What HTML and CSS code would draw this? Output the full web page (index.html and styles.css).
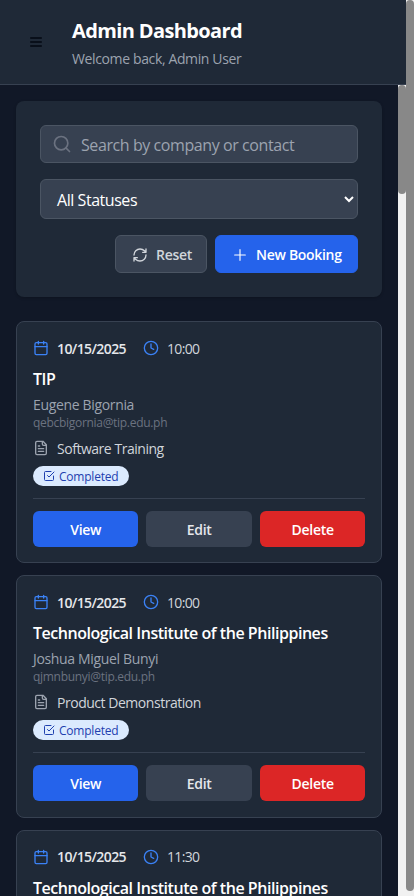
FILE: index.html
```html
<!DOCTYPE html>
<html lang="en">
<head>
<meta charset="utf-8">
<title>Admin Dashboard</title>
<link rel="stylesheet" href="styles.css">
</head>
<body>
<svg class="sprite" aria-hidden="true">
  <symbol id="calendar" viewBox="0 0 24 24"><rect x="3" y="4" width="18" height="18" rx="2"/><path d="M16 2v4M8 2v4M3 10h18"/></symbol>
  <symbol id="clock" viewBox="0 0 24 24"><circle cx="12" cy="12" r="10"/><path d="M12 6v6l4 2"/></symbol>
  <symbol id="file" viewBox="0 0 24 24"><path d="M15 2H6a2 2 0 0 0-2 2v16a2 2 0 0 0 2 2h12a2 2 0 0 0 2-2V7zM14 2v4a2 2 0 0 0 2 2h4M16 13H8M16 17H8M10 9H8"/></symbol>
  <symbol id="check" viewBox="0 0 24 24"><path d="M9 11l3 3L22 4M21 12v7a2 2 0 0 1-2 2H5a2 2 0 0 1-2-2V5a2 2 0 0 1 2-2h11"/></symbol>
</svg>
<div class="app">
  <div class="page">
    <header class="header">
      <svg class="icon menu" viewBox="0 0 24 24"><path d="M4 6h16M4 12h16M4 18h16"/></svg>
      <div class="heading">
        <h1 class="title">Admin Dashboard</h1>
        <p class="welcome">Welcome back, Admin User</p>
      </div>
    </header>
    <div class="body">
      <main class="main">
        <section class="filters">
          <div class="field search">
            <svg class="icon" viewBox="0 0 24 24"><circle cx="11" cy="11" r="8"/><path d="M21 21l-4.35-4.35"/></svg>
            <span>Search by company or contact</span>
          </div>
          <div class="field select">
            <span>All Statuses</span>
            <svg class="icon chevron" viewBox="0 0 10 6"><path d="M1 1l4 4 4-4"/></svg>
          </div>
          <div class="tools">
            <div class="btn reset"><svg class="icon" viewBox="0 0 24 24"><path d="M3 12a9 9 0 0 1 9-9 9.75 9.75 0 0 1 6.74 2.74L21 8M21 3v5h-5M21 12a9 9 0 0 1-9 9 9.75 9.75 0 0 1-6.74-2.74L3 16M8 16H3v5"/></svg><span>Reset</span></div>
            <div class="btn new"><svg class="icon" viewBox="0 0 24 24"><path d="M12 4v16M4 12h16"/></svg><span>New Booking</span></div>
          </div>
        </section>

        <article class="card">
          <div class="when"><svg class="icon"><use href="#calendar"/></svg><span class="date">10/15/2025</span><svg class="icon"><use href="#clock"/></svg><span class="time">10:00</span></div>
          <h2 class="company">TIP</h2>
          <p class="contact">Eugene Bigornia</p>
          <p class="email">qebcbigornia@tip.edu.ph</p>
          <div class="service"><svg class="icon"><use href="#file"/></svg><span>Software Training</span></div>
          <div class="badge"><svg class="icon"><use href="#check"/></svg><span>Completed</span></div>
          <div class="actions"><div class="action view">View</div><div class="action">Edit</div><div class="action delete">Delete</div></div>
        </article>

        <article class="card">
          <div class="when"><svg class="icon"><use href="#calendar"/></svg><span class="date">10/15/2025</span><svg class="icon"><use href="#clock"/></svg><span class="time">10:00</span></div>
          <h2 class="company">Technological Institute of the Philippines</h2>
          <p class="contact">Joshua Miguel Bunyi</p>
          <p class="email">qjmnbunyi@tip.edu.ph</p>
          <div class="service"><svg class="icon"><use href="#file"/></svg><span>Product Demonstration</span></div>
          <div class="badge"><svg class="icon"><use href="#check"/></svg><span>Completed</span></div>
          <div class="actions"><div class="action view">View</div><div class="action">Edit</div><div class="action delete">Delete</div></div>
        </article>

        <article class="card">
          <div class="when"><svg class="icon"><use href="#calendar"/></svg><span class="date">10/15/2025</span><svg class="icon"><use href="#clock"/></svg><span class="time">11:30</span></div>
          <h2 class="company">Technological Institute of the Philippines</h2>
        </article>
      </main>
      <div class="bar inner"><div class="thumb"></div></div>
    </div>
  </div>
  <div class="bar outer"><div class="thumb"></div></div>
</div>
</body>
</html>
```
FILE: styles.css
```css
* { box-sizing: border-box; margin: 0; padding: 0; }
body { font-family: "Open Sans", "Noto Sans", sans-serif; font-size: 14px; background: #111827; color: #fff; overflow: hidden; }
.sprite { position: absolute; width: 0; height: 0; }
.icon { width: 16px; height: 16px; flex: none; fill: none; stroke: currentColor; stroke-width: 2; stroke-linecap: round; stroke-linejoin: round; }
span, p, h1, h2 { white-space: nowrap; }

.app { display: flex; height: 896px; overflow: hidden; }
.page { display: flex; flex-direction: column; width: 406.4px; flex: none; }
.header { display: flex; align-items: center; gap: 28px; height: 85px; flex: none; padding-left: 28px; background: #1f2937; border-bottom: 1px solid #374151; }
.heading { padding-top: 2px; }
.menu { color: #030712; }
.title { font-size: 20px; font-weight: 700; line-height: 28px; letter-spacing: -0.62px; }
.welcome { margin-top: 4px; font-size: 14px; line-height: 20px; letter-spacing: -0.37px; color: #9ca3af; }

.body { display: flex; flex: 1; min-height: 0; }
.main { display: flex; flex-direction: column; gap: 12px; width: 398.4px; flex: none; padding: 16px 16px 0; overflow: hidden; }

.filters { display: flex; flex-direction: column; gap: 16px; flex: none; height: 196px; margin-bottom: 12px; padding: 24px; background: #1f2937; border-radius: 8px; box-shadow: 0 1px 3px rgba(0, 0, 0, .2); }
.field { display: flex; align-items: center; font-size: 16px; background: #374151; border: 1px solid #4b5563; border-radius: 6px; }
.search { height: 38px; gap: 9px; padding-left: 11px; color: #9ca3af; letter-spacing: -0.42px; }
.search span { padding-top: 2px; }
.search .icon { width: 20px; height: 20px; color: #6b7280; }
.select { height: 40.5px; justify-content: space-between; padding: 3px 3px 0 16px; letter-spacing: -0.45px; }
.chevron { width: 10px; height: 6px; margin-bottom: 3px; overflow: visible; stroke-linecap: butt; stroke-linejoin: miter; }
.tools { display: flex; justify-content: flex-end; gap: 8px; }
.btn { display: flex; align-items: center; gap: 8px; height: 38px; padding: 1px 16px 0; border: 1px solid #4b5563; border-radius: 6px; font-weight: 600; letter-spacing: -0.3px; }
.reset { width: 92px; background: #374151; color: #d1d5db; }
.new { width: 143.4px; background: #2563eb; border-color: #2563eb; }
.new .icon { stroke-width: 1.7; }

.card { flex: none; height: 242.3px; padding: 16px; background: #1f2937; border: 1px solid #374151; border-radius: 8px; }
.when { display: flex; align-items: center; gap: 8px; height: 20px; }
.when .icon { color: #3b82f6; }
.date { width: 70px; margin-right: 8px; font-weight: 600; color: #e5e7eb; letter-spacing: -0.6px; }
.time { color: #d1d5db; letter-spacing: -0.65px; }
.company { margin-top: 9px; font-size: 16px; font-weight: 600; line-height: 24px; letter-spacing: -0.46px; }
.contact { margin-top: 4px; line-height: 20px; color: #9ca3af; letter-spacing: -0.34px; }
.email { font-size: 12px; line-height: 16px; color: #6b7280; letter-spacing: -0.3px; }
.service { display: flex; align-items: center; gap: 8px; height: 20px; margin-top: 7px; color: #d1d5db; letter-spacing: -0.47px; }
.service .icon { color: #9ca3af; }
.badge { display: flex; align-items: center; gap: 4px; width: 96px; height: 20px; margin-top: 8px; padding-left: 10px; border-radius: 10px; background: #dbeafe; color: #1e40af; font-size: 12px; font-weight: 500; letter-spacing: -0.22px; }
.badge .icon { width: 12px; height: 12px; }
.actions { display: flex; gap: 8px; margin-top: 12px; padding-top: 12px; border-top: 1px solid #374151; }
.action { flex: 1; height: 36px; border-radius: 6px; background: #374151; color: #e5e7eb; font-weight: 600; line-height: 38px; text-align: center; letter-spacing: -0.3px; }
.view { background: #2563eb; color: #fff; }
.delete { background: #dc2626; color: #fff; }

.bar { width: 8px; flex: none; background: #f1f1f1; }
.thumb { background: #888; border-radius: 4px; }
.inner .thumb { height: 109px; }
.outer .thumb { height: 891px; }
```
